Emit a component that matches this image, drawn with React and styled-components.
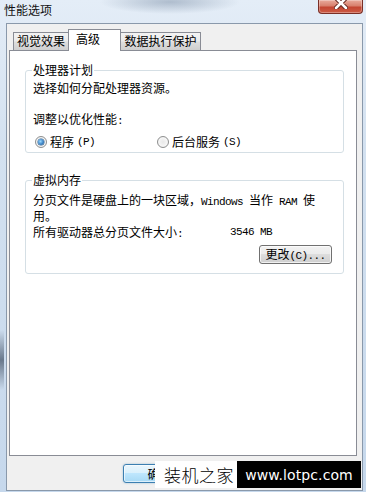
import styled, { createGlobalStyle, css } from "styled-components";

const GlobalStyle = createGlobalStyle`
  * {
    box-sizing: border-box;
  }
  html,
  body {
    margin: 0;
    padding: 0;
  }
  body {
    font-family: "Noto Sans CJK SC", "Liberation Sans", sans-serif;
    font-size: 12px;
    line-height: 14px;
    color: #000;
  }
`;

export default function App() {
  return (
    <>
      <GlobalStyle />
      <StyledWindow>
        <StyledTitleBar>
          <StyledTitle>性能选项</StyledTitle>
          <StyledClose>
            <svg width="14" height="12" viewBox="0 0 14 12">
              <path d="M2 1 L12 11 M12 1 L2 11" stroke="#5b1f17" strokeWidth="4.5" strokeLinecap="round" />
              <path d="M2 1 L12 11 M12 1 L2 11" stroke="#fff" strokeWidth="2.6" strokeLinecap="round" />
            </svg>
          </StyledClose>
        </StyledTitleBar>

        <StyledClient>
          <StyledTabStrip>
            <StyledTab $w={56}>视觉效果</StyledTab>
            <StyledTab $w={53} $active>
              高级
            </StyledTab>
            <StyledTab $w={81}>数据执行保护</StyledTab>
          </StyledTabStrip>

          <StyledPanel>
            <StyledGroup $mt={0} $pt={4} $pb={3}>
              <StyledLegend>处理器计划</StyledLegend>
              <StyledText>选择如何分配处理器资源。</StyledText>
              <StyledText $mt={17}>
                调整以优化性能<Latin>:</Latin>
              </StyledText>
              <StyledRadioRow>
                <StyledRadioItem $w={122}>
                  <StyledRadio $checked />
                  程序<Latin>(P)</Latin>
                </StyledRadioItem>
                <StyledRadioItem>
                  <StyledRadio />
                  后台服务<Latin>(S)</Latin>
                </StyledRadioItem>
              </StyledRadioRow>
            </StyledGroup>

            <StyledGroup $mt={20} $pt={6} $pb={9}>
              <StyledLegend>虚拟内存</StyledLegend>
              <StyledText>
                分页文件是硬盘上的一块区域，<Latin>Windows </Latin>当作
                <Latin> RAM </Latin>使
                <br />
                用。
              </StyledText>
              <StyledInfoRow>
                <StyledLabel>
                  所有驱动器总分页文件大小<Latin>:</Latin>
                </StyledLabel>
                <Latin>3546 MB</Latin>
              </StyledInfoRow>
              <StyledButtonRow>
                <StyledButton>
                  更改<Latin>(C)...</Latin>
                </StyledButton>
              </StyledButtonRow>
            </StyledGroup>
          </StyledPanel>

          <StyledFooter>
            <StyledButton $default>确定</StyledButton>
          </StyledFooter>
        </StyledClient>

        <StyledWatermark>
          <StyledMarkName>装机之家</StyledMarkName>
          <StyledMarkUrl>www.lotpc.com</StyledMarkUrl>
        </StyledWatermark>
      </StyledWindow>
    </>
  );
}

// Styled components

const StyledWindow = styled.div`
  position: relative;
  width: 366px;
  height: 492px;
  overflow: hidden;
  display: flex;
  flex-direction: column;
  background:
    radial-gradient(ellipse 70px 12px at 170px 2px, rgba(110, 130, 155, 0.45), rgba(110, 130, 155, 0)),
    linear-gradient(180deg, rgba(40, 55, 75, 0) 330px, rgba(40, 55, 75, 0.6) 360px, rgba(40, 55, 75, 0) 390px) left top / 4px 100% no-repeat,
    linear-gradient(180deg, #e4edf7 0%, #d3e1f0 30%, #c6d8ec 100%);
`;

const StyledTitleBar = styled.div`
  height: 23px;
  display: flex;
  justify-content: space-between;
  align-items: flex-start;
  padding: 0 3px 0 4px;
`;

const StyledTitle = styled.div`
  padding-top: 3px;
  color: #111;
`;

const StyledClose = styled.div`
  width: 45px;
  height: 14px;
  display: flex;
  justify-content: center;
  align-items: flex-end;
  overflow: hidden;
  border: 1px solid #7a2f26;
  border-top: none;
  border-radius: 0 0 4px 4px;
  background: linear-gradient(180deg, #e9ab9c 0%, #d8806d 45%, #c44632 55%, #cc5c46 100%);
  box-shadow: inset 0 0 0 1px rgba(255, 255, 255, 0.3);

  svg {
    margin-bottom: 4px;
  }
`;

const StyledClient = styled.div`
  flex: 1;
  margin: 0 3px 1px 6px;
  padding: 5px 5px 0 2px;
  display: flex;
  flex-direction: column;
  border: 1px solid #8a99ab;
  background: #f0f0f0;
`;

const StyledTabStrip = styled.div`
  height: 21px;
  display: flex;
  align-items: flex-end;
  padding-left: 4px;
`;

const StyledTab = styled.div`
  position: relative;
  width: ${(p) => p.$w}px;
  height: 18px;
  padding-top: 1px;
  text-align: center;
  white-space: nowrap;
  border: 1px solid #898c95;
  border-bottom: none;
  background: linear-gradient(180deg, #f3f3f3 0%, #ebebeb 45%, #dddddd 55%, #cfcfcf 100%);

  ${(p) =>
    p.$active &&
    css`
      z-index: 1;
      height: 22px;
      margin: 0 -1px -1px;
      padding: 2px 0 0 7px;
      text-align: left;
      background: #fff;
    `}
`;

const StyledPanel = styled.div`
  height: 406px;
  padding: 12px 12px 0 15px;
  border: 1px solid #898c95;
  background: #fff;
`;

const StyledGroup = styled.fieldset`
  margin: ${(p) => p.$mt}px 0 0;
  padding: ${(p) => p.$pt}px 11px ${(p) => p.$pb}px 7px;
  min-inline-size: 0;
  border: 1px solid #d5dfe5;
  border-radius: 3px;
`;

const StyledLegend = styled.legend`
  margin-left: -1px;
  padding: 0 1px;
  line-height: 14px;
`;

const StyledText = styled.div`
  margin-top: ${(p) => p.$mt || 0}px;
`;

const Latin = styled.span`
  font-family: "Liberation Mono", monospace;
  font-size: 11px;
  letter-spacing: -0.6px;
`;

const StyledRadioRow = styled.div`
  display: flex;
  margin-top: 7px;
  height: 14px;
`;

const StyledRadioItem = styled.label`
  display: flex;
  align-items: center;
  gap: 3px;
  width: ${(p) => (p.$w ? `${p.$w}px` : "auto")};
  padding-left: 2px;
`;

const StyledRadio = styled.span`
  position: relative;
  width: 12px;
  height: 12px;
  flex: none;
  border-radius: 50%;
  border: 1px solid #8e8f8f;
  background: radial-gradient(circle at 50% 50%, #e8e8e8 0%, #f6f6f6 60%, #dcdcdc 100%);

  ${(p) =>
    p.$checked &&
    css`
      &::after {
        content: "";
        position: absolute;
        left: 2px;
        top: 2px;
        width: 6px;
        height: 6px;
        border-radius: 50%;
        background: radial-gradient(circle at 40% 40%, #9ad9ff 0%, #3d84c6 55%, #1b4f86 100%);
        box-shadow: 0 0 0 0.5px #2c5d8c;
      }
    `}
`;

const StyledInfoRow = styled.div`
  display: flex;
  margin-top: 2px;
`;

const StyledLabel = styled.div`
  width: 197px;
`;

const StyledButtonRow = styled.div`
  display: flex;
  justify-content: flex-end;
  margin-top: 4px;
`;

const StyledButton = styled.button`
  width: 73px;
  height: 19px;
  padding: 0;
  font: inherit;
  line-height: 14px;
  color: #000;
  border: 1px solid #707070;
  border-radius: 3px;
  background: linear-gradient(180deg, #f2f2f2 0%, #ebebeb 49%, #dddddd 50%, #cfcfcf 100%);
  box-shadow: inset 0 0 0 1px rgba(255, 255, 255, 0.7);

  ${(p) =>
    p.$default &&
    css`
      border-color: #3c7fb1;
      background: linear-gradient(180deg, #eaf6fd 0%, #d9f0fc 49%, #bee6fd 50%, #a7d9f5 100%);
      box-shadow: inset 0 0 0 1px rgba(255, 255, 255, 0.6), 0 0 2px rgba(60, 127, 177, 0.5);
    `}
`;

const StyledFooter = styled.div`
  height: 34px;
  display: flex;
  align-items: flex-start;
  padding: 8px 0 0 114px;
`;

const StyledWatermark = styled.div`
  position: absolute;
  left: 155px;
  top: 461px;
  height: 27px;
  display: flex;
`;

const StyledMarkName = styled.div`
  width: 82px;
  padding-left: 9px;
  display: flex;
  align-items: center;
  background: #fff;
  font-size: 17px;
  font-weight: 300;
  letter-spacing: 0.5px;
  white-space: nowrap;
`;

const StyledMarkUrl = styled.div`
  width: 124px;
  display: flex;
  align-items: center;
  justify-content: center;
  background: #000;
  color: #fff;
  font-family: "DejaVu Sans", sans-serif;
  font-size: 14px;
  letter-spacing: 0.1px;
`;
